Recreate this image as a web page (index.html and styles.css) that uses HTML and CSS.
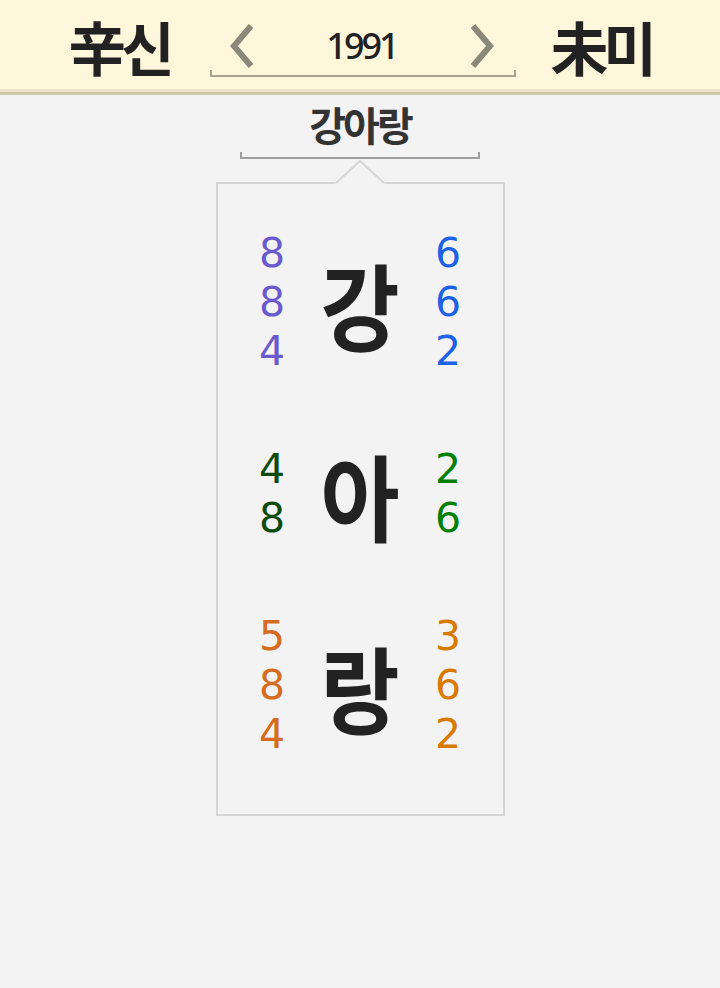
FILE: index.html
```html
<!DOCTYPE html>
<html lang="ko">
<head>
<meta charset="utf-8">
<title>강아랑</title>
<link rel="stylesheet" href="styles.css">
</head>
<body>
<header class="topbar">
  <div class="ganji">辛신</div>
  <div class="year-nav">
    <div class="year-row">
      <svg class="chev" width="26" height="44" viewBox="0 0 26 44"><path d="M23 2 L6 22 L23 42" fill="none" stroke="#8a8878" stroke-width="6" stroke-linejoin="miter"/></svg>
      <span class="year">1991</span>
      <svg class="chev" width="26" height="44" viewBox="0 0 26 44"><path d="M3 2 L20 22 L3 42" fill="none" stroke="#8a8878" stroke-width="6" stroke-linejoin="miter"/></svg>
    </div>
    <div class="bracket bracket-year"></div>
  </div>
  <div class="ganji">未미</div>
</header>
<main class="content">
  <div class="name">강아랑</div>
  <div class="bracket bracket-name"></div>
  <section class="card">
    <svg class="notch" width="50" height="24" viewBox="0 0 50 24"><polygon points="0,24 25,1 50,24" fill="#f3f3f3"/><polyline points="1,23 25,1 49,23" fill="none" stroke="#d6d6d6" stroke-width="2"/></svg>
    <div class="row">
      <div class="nums purple"><span>8</span><span>8</span><span>4</span></div>
      <div class="char">강</div>
      <div class="nums blue"><span>6</span><span>6</span><span>2</span></div>
    </div>
    <div class="row">
      <div class="nums dgreen"><span>4</span><span>8</span></div>
      <div class="char">아</div>
      <div class="nums green"><span>2</span><span>6</span></div>
    </div>
    <div class="row">
      <div class="nums orange1"><span>5</span><span>8</span><span>4</span></div>
      <div class="char">랑</div>
      <div class="nums orange2"><span>3</span><span>6</span><span>2</span></div>
    </div>
  </section>
</main>
</body>
</html>
```
FILE: styles.css
```css
html, body {
  margin: 0;
  padding: 0;
}
body {
  background: #f3f3f3;
  font-family: "Noto Sans CJK KR", "Noto Sans", sans-serif;
  color: #222222;
  width: 720px;
  height: 988px;
  overflow: hidden;
}
.topbar {
  height: 89px;
  background: #fff7dc;
  border-bottom: 3px solid #ebe3c7;
  box-shadow: 0 3px 0 #cdc6ab;
  display: flex;
  justify-content: center;
  align-items: flex-start;
}
.ganji {
  font-size: 58px;
  line-height: 58px;
  font-weight: 700;
  letter-spacing: -5px;
  margin-top: 17px;
  color: #222222;
}
.ganji:first-child {
  margin-right: 40px;
}
.ganji:last-child {
  margin-left: 35px;
}
.year-nav {
  width: 306px;
  margin-top: 22px;
  display: flex;
  flex-direction: column;
}
.year-row {
  display: flex;
  justify-content: space-between;
  align-items: center;
  padding: 0 20px 0 18px;
  height: 48px;
}
.chev {
  display: block;
}
.year {
  font-family: "Noto Sans", sans-serif;
  font-size: 36px;
  line-height: 40px;
  font-weight: 500;
  letter-spacing: -3px;
  color: #222222;
}
.bracket {
  height: 5px;
  border: 2px solid;
  border-top: none;
}
.bracket-year {
  border-color: #a6a48e;
}
.content {
  display: flex;
  flex-direction: column;
  align-items: center;
  padding-top: 8px;
}
.name {
  font-size: 40px;
  line-height: 48px;
  font-weight: 700;
  letter-spacing: -3px;
  color: #333333;
}
.bracket-name {
  width: 236px;
  margin-top: 4px;
  border-color: #a0a0a0;
}
.card {
  position: relative;
  margin-top: 23px;
  width: 285px;
  border: 2px solid #d6d6d6;
  padding: 45px 0 55px;
  display: flex;
  flex-direction: column;
  gap: 69px;
}
.notch {
  position: absolute;
  top: -24px;
  left: 117px;
}
.row {
  display: flex;
  justify-content: center;
  align-items: center;
}
.nums {
  width: 40px;
  display: flex;
  flex-direction: column;
  align-items: center;
  font-family: "DejaVu Sans", sans-serif;
  font-size: 41px;
  line-height: 49px;
}
.nums span {
  display: block;
  height: 49px;
}
.char {
  width: 136px;
  text-align: center;
  font-size: 86px;
  line-height: 86px;
  font-weight: 700;
  color: #222222;
  transform: scaleY(1.1);
}
.purple { color: #6a5acd; }
.blue { color: #1c62e6; }
.dgreen { color: #0b4b0b; }
.green { color: #008000; }
.orange1 { color: #d56c20; }
.orange2 { color: #d97a00; }
```
